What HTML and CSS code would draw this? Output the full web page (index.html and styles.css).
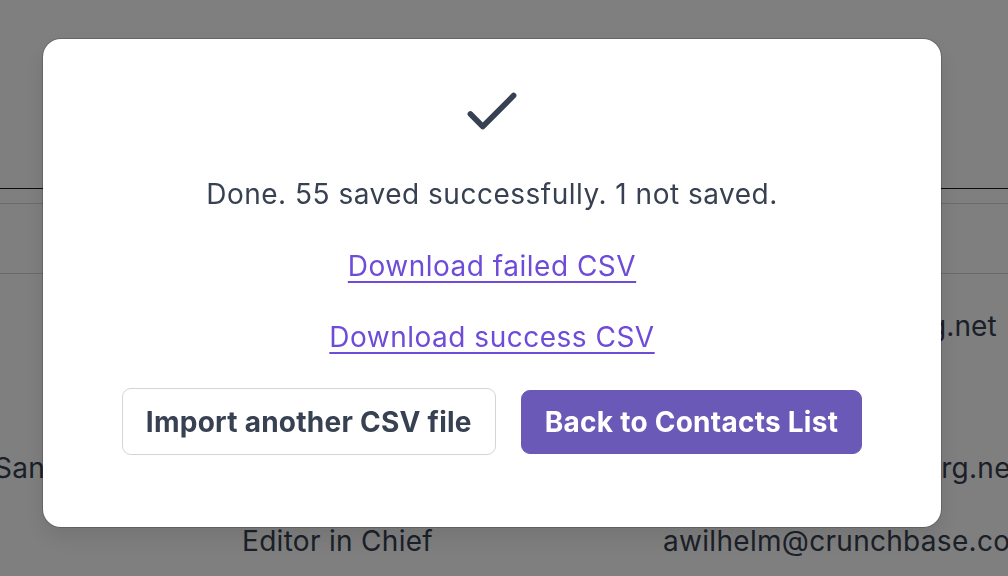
FILE: index.html
```html
<!DOCTYPE html>
<html lang="en">
<head>
<meta charset="utf-8">
<title>Import contacts</title>
<link rel="stylesheet" href="styles.css">
</head>
<body>
<div class="page">
  <div class="topbar"></div>
  <div class="thead"></div>
  <div class="filters"></div>
  <div class="rows">
    <div class="row row-first">
      <span class="cell c-loc"></span>
      <span class="cell c-title"></span>
      <span class="cell c-email">mjacobs@bloomberg.net</span>
    </div>
    <div class="row row-second">
      <span class="cell c-loc">San Jose</span>
      <span class="cell c-title"></span>
      <span class="cell c-email">dkowalski@bloomberg.net</span>
    </div>
    <div class="row row-third">
      <span class="cell c-loc"></span>
      <span class="cell c-title">Editor in Chief</span>
      <span class="cell c-email">awilhelm@crunchbase.com</span>
    </div>
  </div>
</div>

<div class="overlay">
  <div class="modal" role="dialog">
    <svg class="check" viewBox="0 0 24 24" width="74" height="74" fill="none" stroke="#374151" stroke-width="1.85" stroke-linecap="round" stroke-linejoin="round">
      <path d="M5 13l4 4L19 7"/>
    </svg>
    <p class="status">Done. 55 saved successfully. 1 not saved.</p>
    <a class="link" href="#">Download failed CSV</a>
    <a class="link" href="#">Download success CSV</a>
    <div class="actions">
      <button class="btn btn-secondary">Import another CSV file</button>
      <button class="btn btn-primary">Back to Contacts List</button>
    </div>
  </div>
</div>
</body>
</html>
```

FILE: styles.css
```css
* { box-sizing: border-box; }

html, body {
  margin: 0;
  padding: 0;
  height: 100%;
  overflow: hidden;
}

body {
  background: #ffffff;
  font-family: Inter, "Noto Sans", sans-serif;
  color: #374151;
}

/* background page */
.page {
  width: 1008px;
}

.topbar {
  height: 189px;
  border-bottom: 1px solid #111827;
}

.thead {
  height: 15px;
  border-bottom: 1px solid #d1d5db;
}

.filters {
  height: 70px;
  border-bottom: 1px solid #d1d5db;
}

.rows {
  display: flex;
  flex-direction: column;
}

.row {
  display: grid;
  grid-template-columns: 248px 421px 400px;
  margin-left: -6px;
  font-size: 28px;
  letter-spacing: 0.3px;
  line-height: 32px;
  white-space: nowrap;
}

.row-first { margin-top: 36px; }
.row-first .c-email { letter-spacing: 0.1px; }
.row-second { margin-top: 110px; }
.row-third { margin-top: 41px; }

.cell { overflow: visible; }

/* modal */
.overlay {
  position: fixed;
  inset: 0;
  background: rgba(0, 0, 0, 0.5);
  display: flex;
  align-items: flex-start;
  padding: 39px 0 0 43px;
}

.modal {
  width: 898px;
  height: 488px;
  background: #ffffff;
  border-radius: 18px;
  box-shadow: 0 0 0 1px rgba(0, 0, 0, 0.18), 0 10px 25px rgba(0, 0, 0, 0.1);
  display: flex;
  flex-direction: column;
  align-items: center;
  padding-top: 35px;
}

.check {
  display: block;
  margin-bottom: 25px;
}

.status {
  margin: 0 0 30px;
  font-size: 28px;
  letter-spacing: 0.5px;
  line-height: 42px;
  color: #374151;
}

.link {
  font-size: 28px;
  letter-spacing: 0.5px;
  line-height: 42px;
  color: #6e4bd8;
  text-decoration: underline;
  text-underline-offset: 5px;
  text-decoration-thickness: 2px;
  margin-bottom: 29px;
}

.actions {
  display: flex;
  align-items: center;
  gap: 25px;
  margin-top: 1px;
}

.btn {
  font-family: Inter, "Noto Sans", sans-serif;
  font-size: 28px;
  font-weight: 700;
  letter-spacing: 0.25px;
  line-height: 42px;
  padding: 0 23px;
  border-radius: 9px;
  cursor: pointer;
}

.btn-secondary {
  height: 67px;
  background: #ffffff;
  color: #374151;
  border: 1px solid #d1d5db;
}

.btn-primary {
  height: 64px;
  background: #6a59b6;
  color: #ffffff;
  border: 1px solid #6a59b6;
}
```
